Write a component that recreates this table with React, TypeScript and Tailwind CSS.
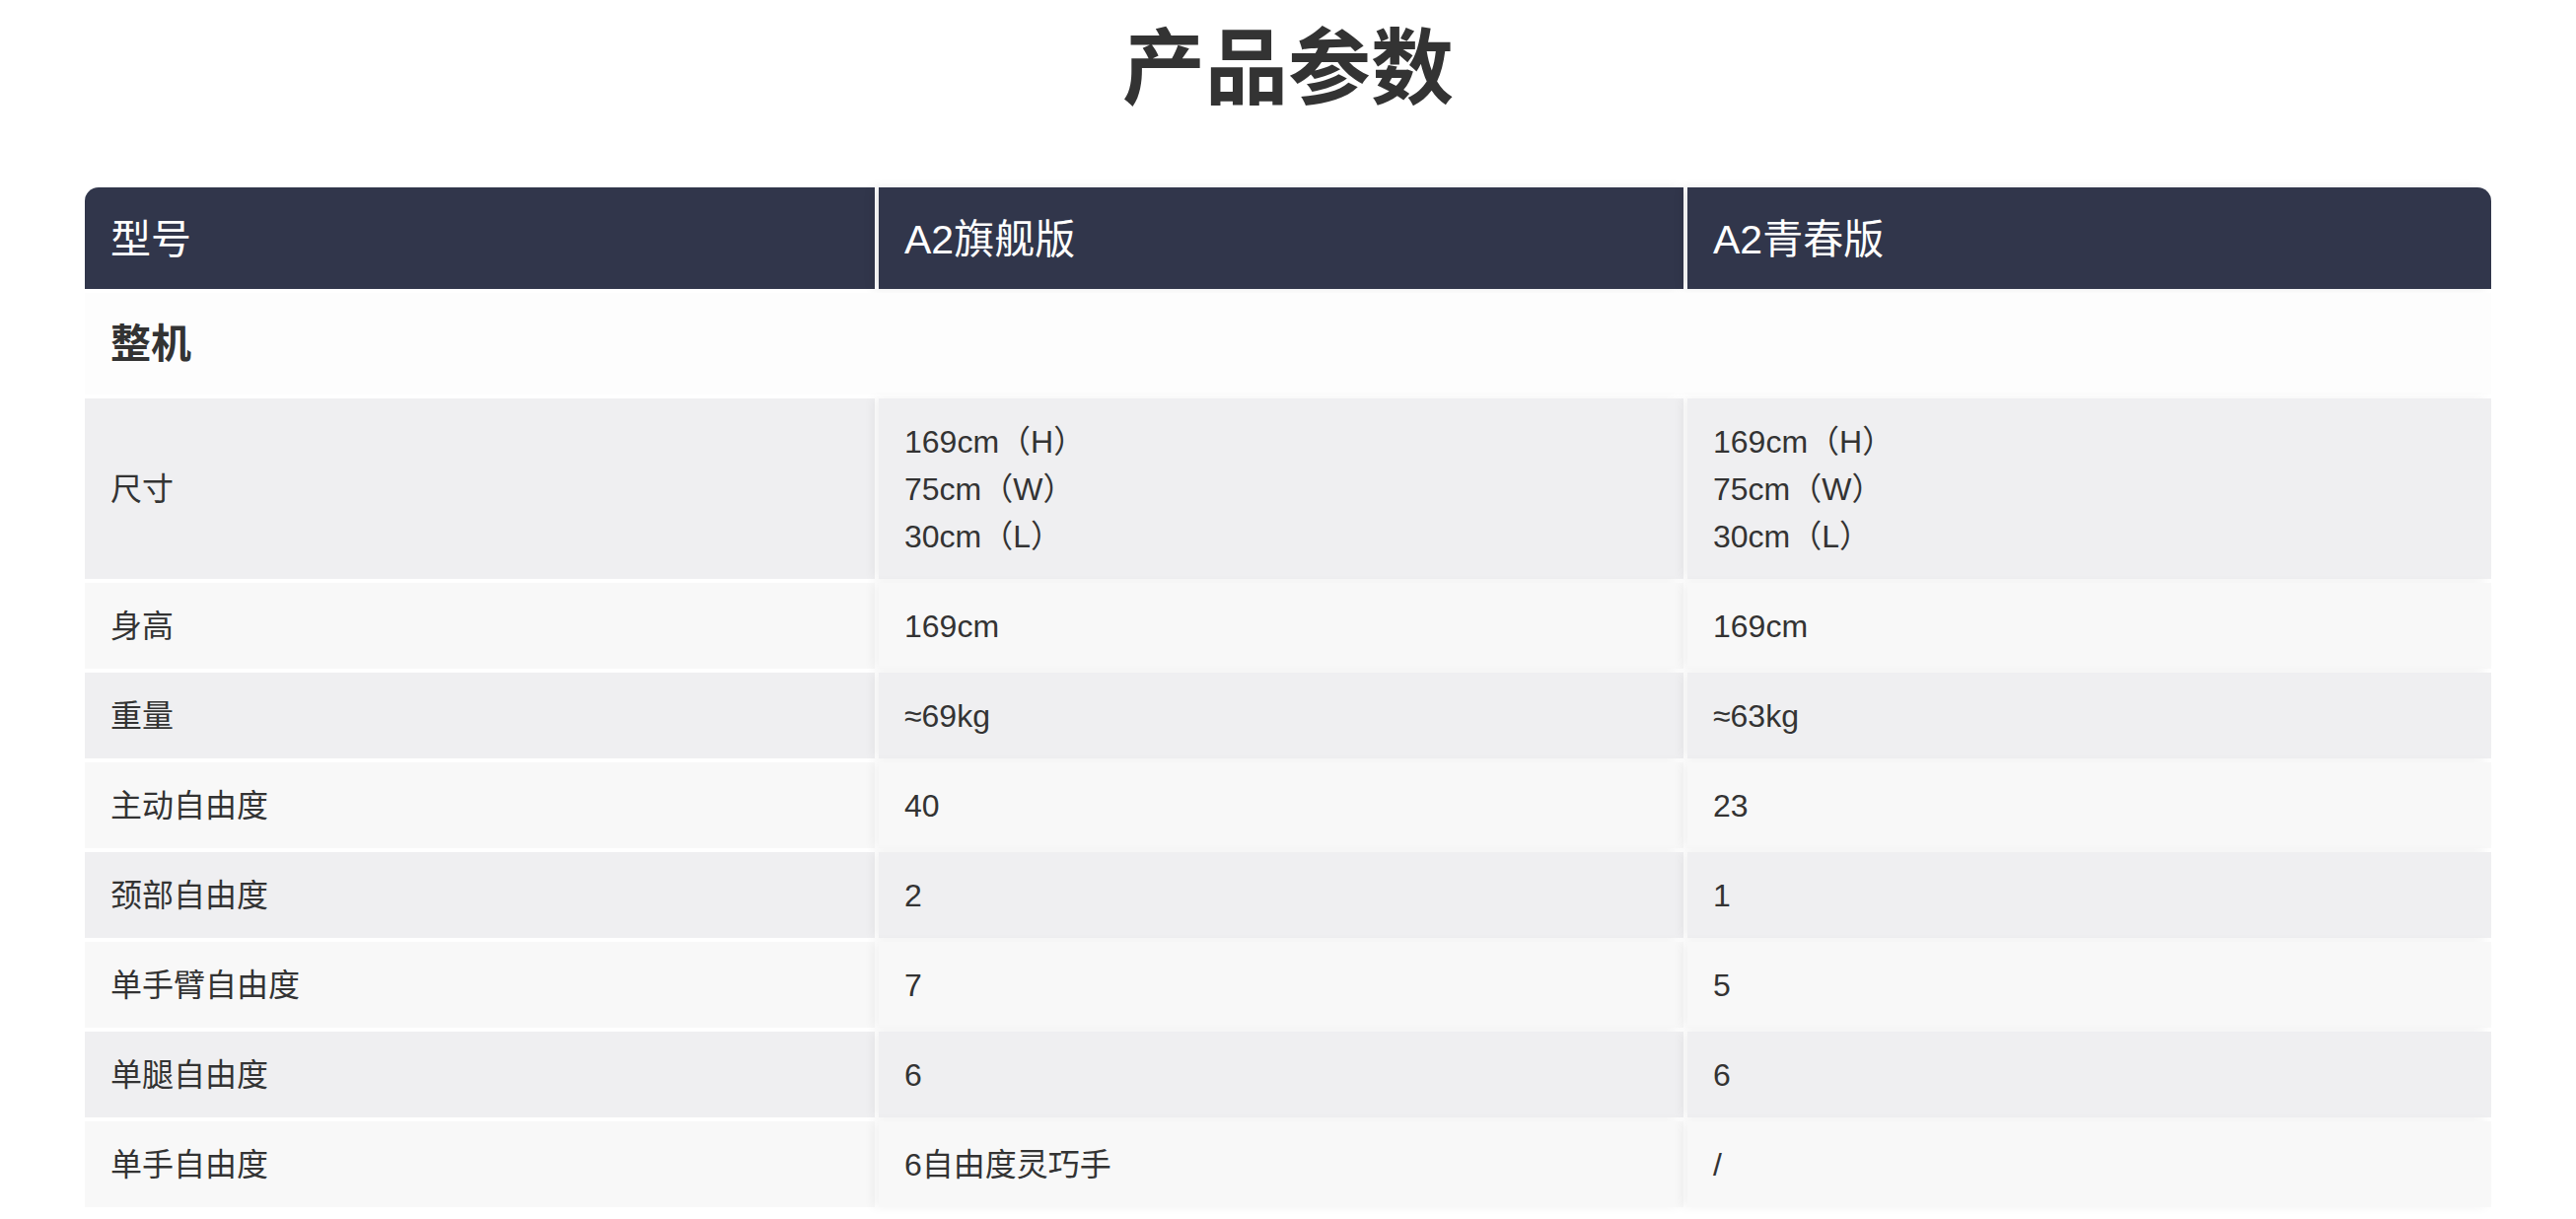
import React from 'react';

const font = { fontFamily: '"Liberation Sans", "Noto Sans CJK SC", sans-serif' };

type Row = { label: string; flagship: string[]; youth: string[] };

const rows: Row[] = [
  { label: '尺寸', flagship: ['169cm（H）', '75cm（W）', '30cm（L）'], youth: ['169cm（H）', '75cm（W）', '30cm（L）'] },
  { label: '身高', flagship: ['169cm'], youth: ['169cm'] },
  { label: '重量', flagship: ['≈69kg'], youth: ['≈63kg'] },
  { label: '主动自由度', flagship: ['40'], youth: ['23'] },
  { label: '颈部自由度', flagship: ['2'], youth: ['1'] },
  { label: '单手臂自由度', flagship: ['7'], youth: ['5'] },
  { label: '单腿自由度', flagship: ['6'], youth: ['6'] },
  { label: '单手自由度', flagship: ['6自由度灵巧手'], youth: ['/'] },
];

function Cell({ lines, bg, first }: { lines: string[]; bg: string; first?: boolean }) {
  return (
    <div
      className={`flex flex-col justify-center px-[26px] py-[19.5px] text-[32px] leading-[48px] text-[#333] ${bg} ${
        first ? '' : 'shadow-[-6px_0_10px_rgba(0,0,0,0.05)]'
      }`}
    >
      {lines.map((l, i) => (
        <span key={i}>{l}</span>
      ))}
    </div>
  );
}

export default function App() {
  return (
    <div className="min-h-screen bg-white" style={font}>
      <h1 className="pt-[20px] text-center text-[84px] leading-[100px] font-bold text-[#333]">产品参数</h1>

      <div className="mx-[86px] mt-[70px] grid grid-cols-[801fr_816fr_815fr] gap-[4px]">
        <div className="flex h-[103px] items-center rounded-tl-[14px] bg-[#31364b] px-[26px] pt-[4px] text-[41px] text-white">
          型号
        </div>
        <div className="flex h-[103px] items-center bg-[#31364b] px-[26px] pt-[4px] text-[41px] text-white shadow-[-6px_0_10px_rgba(0,0,0,0.08)]">
          A2旗舰版
        </div>
        <div className="flex h-[103px] items-center rounded-tr-[14px] bg-[#31364b] px-[26px] pt-[4px] text-[41px] text-white shadow-[-6px_0_10px_rgba(0,0,0,0.08)]">
          A2青春版
        </div>

        <div className="col-span-3 flex h-[103px] items-center bg-[#fdfdfd] px-[26px] pt-[2px] text-[41px] font-bold text-[#333]">
          整机
        </div>

        {rows.map((r, i) => {
          const bg = i % 2 === 0 ? 'bg-[#efeff1]' : 'bg-[#f8f8f8]';
          return (
            <React.Fragment key={r.label}>
              <Cell lines={[r.label]} bg={bg} first />
              <Cell lines={r.flagship} bg={bg} />
              <Cell lines={r.youth} bg={bg} />
            </React.Fragment>
          );
        })}
      </div>
    </div>
  );
}
